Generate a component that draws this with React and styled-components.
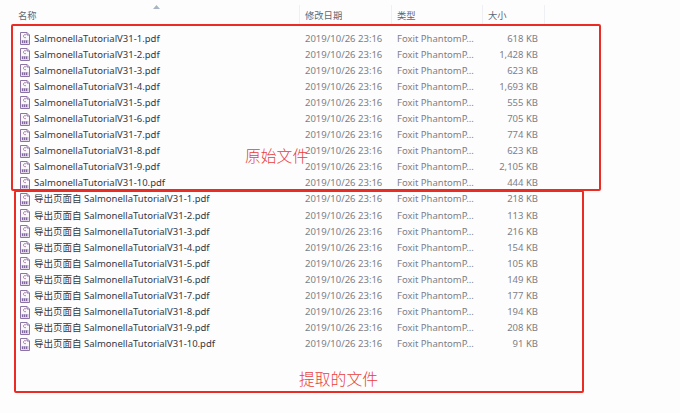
import React from 'react';
import styled, { createGlobalStyle } from 'styled-components';

const Global = createGlobalStyle`
  html, body { margin: 0; padding: 0; background: #fefdfe; }
  body { font-family: "Noto Sans", "Noto Sans CJK SC", sans-serif; }
`;

const Page = styled.div`
  position: relative;
  width: 680px;
  height: 413px;
  overflow: hidden;
  background: #fefdfe;
`;

const Header = styled.div`
  display: grid;
  grid-template-columns: 300px 92px 91px 62px;
  height: 30.5px;
  position: relative;
`;

const HeadCell = styled.div`
  font-size: 9.3px;
  color: #5f6874;
  padding: 3px 0 0 ${p => p.$pad}px;
  line-height: 15px;
  border-right: 1px solid #eef0f4;
  height: 20px;
  margin-top: 5px;
  box-sizing: border-box;
`;

const SortArrow = styled.svg`
  position: absolute;
  left: 153px;
  top: 5px;
`;

const List = styled.div`
  display: flex;
  flex-direction: column;
`;

const Row = styled.div`
  display: grid;
  grid-template-columns: 305px 92px 91px 50px;
  height: 16.1px;
  align-items: center;
  font-size: 9.5px;
  line-height: 16px;
  white-space: nowrap;
`;

const NameCell = styled.div`
  display: flex;
  align-items: center;
  gap: 4px;
  padding-left: 20px;
  color: #33383e;
`;

const DateCell = styled.div`
  color: #7b8087;
`;

const TypeCell = styled.div`
  color: #7b8087;
`;

const SizeCell = styled.div`
  color: #7b8087;
  text-align: right;
`;

const Callout = styled.div`
  position: absolute;
  left: ${p => p.$x}px;
  top: ${p => p.$y}px;
  width: ${p => p.$w}px;
  height: ${p => p.$h}px;
  box-sizing: border-box;
  border: 2px solid #ea2c24;
  border-radius: 2px;
`;

const CalloutLabel = styled.div`
  position: absolute;
  left: ${p => p.$x}px;
  top: ${p => p.$y}px;
  font-size: 15.8px;
  line-height: 20px;
  color: #e8403a;
  font-family: "Noto Sans CJK SC", sans-serif;
  font-weight: 300;
  white-space: nowrap;
`;

const PdfIcon = () => (
  <svg width="10" height="13" viewBox="0 0 10 13" style={{ flex: 'none' }}>
    <path d="M.5.5h6.500l2.500 2.500v9.500h-9z" fill="#fbf8fc" stroke="#8d74a6" />
    <path d="M7 .5v2.500h2.500" fill="#e9dff0" stroke="#8d74a6" />
    <path d="M6 3c-1.200-1-2.800 0-2.500 1.500.2 1 1.500 1.500 2.500 1" fill="none" stroke="#a0709c" strokeWidth=".9" />
    <rect x="1.500" y="8" width="7" height="3.500" fill="#c9b8d8" />
    <path d="M2.500 8.500v2.500M4.500 8.500v2.500M6.500 8.500v2.500" stroke="#6f5490" strokeWidth=".8" />
  </svg>
);

const originals = ['618 KB', '1,428 KB', '623 KB', '1,693 KB', '555 KB', '705 KB', '774 KB', '623 KB', '2,105 KB', '444 KB']
  .map((size, i) => ({ name: `SalmonellaTutorialV31-${i + 1}.pdf`, size }));

const extracted = ['218 KB', '113 KB', '216 KB', '154 KB', '105 KB', '149 KB', '177 KB', '194 KB', '208 KB', '91 KB']
  .map((size, i) => ({ name: `导出页面自 SalmonellaTutorialV31-${i + 1}.pdf`, size }));

export default function App() {
  return (
    <Page>
      <Global />
      <Header>
        <HeadCell $pad={18}>名称</HeadCell>
        <HeadCell $pad={5}>修改日期</HeadCell>
        <HeadCell $pad={5}>类型</HeadCell>
        <HeadCell $pad={5}>大小</HeadCell>
        <SortArrow width="7" height="4" viewBox="0 0 7 4">
          <path d="M0 4L3.500 0 7 4z" fill="#a9b4c4" />
        </SortArrow>
      </Header>
      <List>
        {[...originals, ...extracted].map(f => (
          <Row key={f.name}>
            <NameCell><PdfIcon />{f.name}</NameCell>
            <DateCell>2019/10/26 23:16</DateCell>
            <TypeCell>Foxit PhantomP...</TypeCell>
            <SizeCell>{f.size}</SizeCell>
          </Row>
        ))}
      </List>
      <Callout $x={11} $y={24} $w={590} $h={167} />
      <Callout $x={14} $y={190} $w={570} $h={203} />
      <CalloutLabel $x={245} $y={146}>原始文件</CalloutLabel>
      <CalloutLabel $x={299} $y={369}>提取的文件</CalloutLabel>
    </Page>
  );
}
